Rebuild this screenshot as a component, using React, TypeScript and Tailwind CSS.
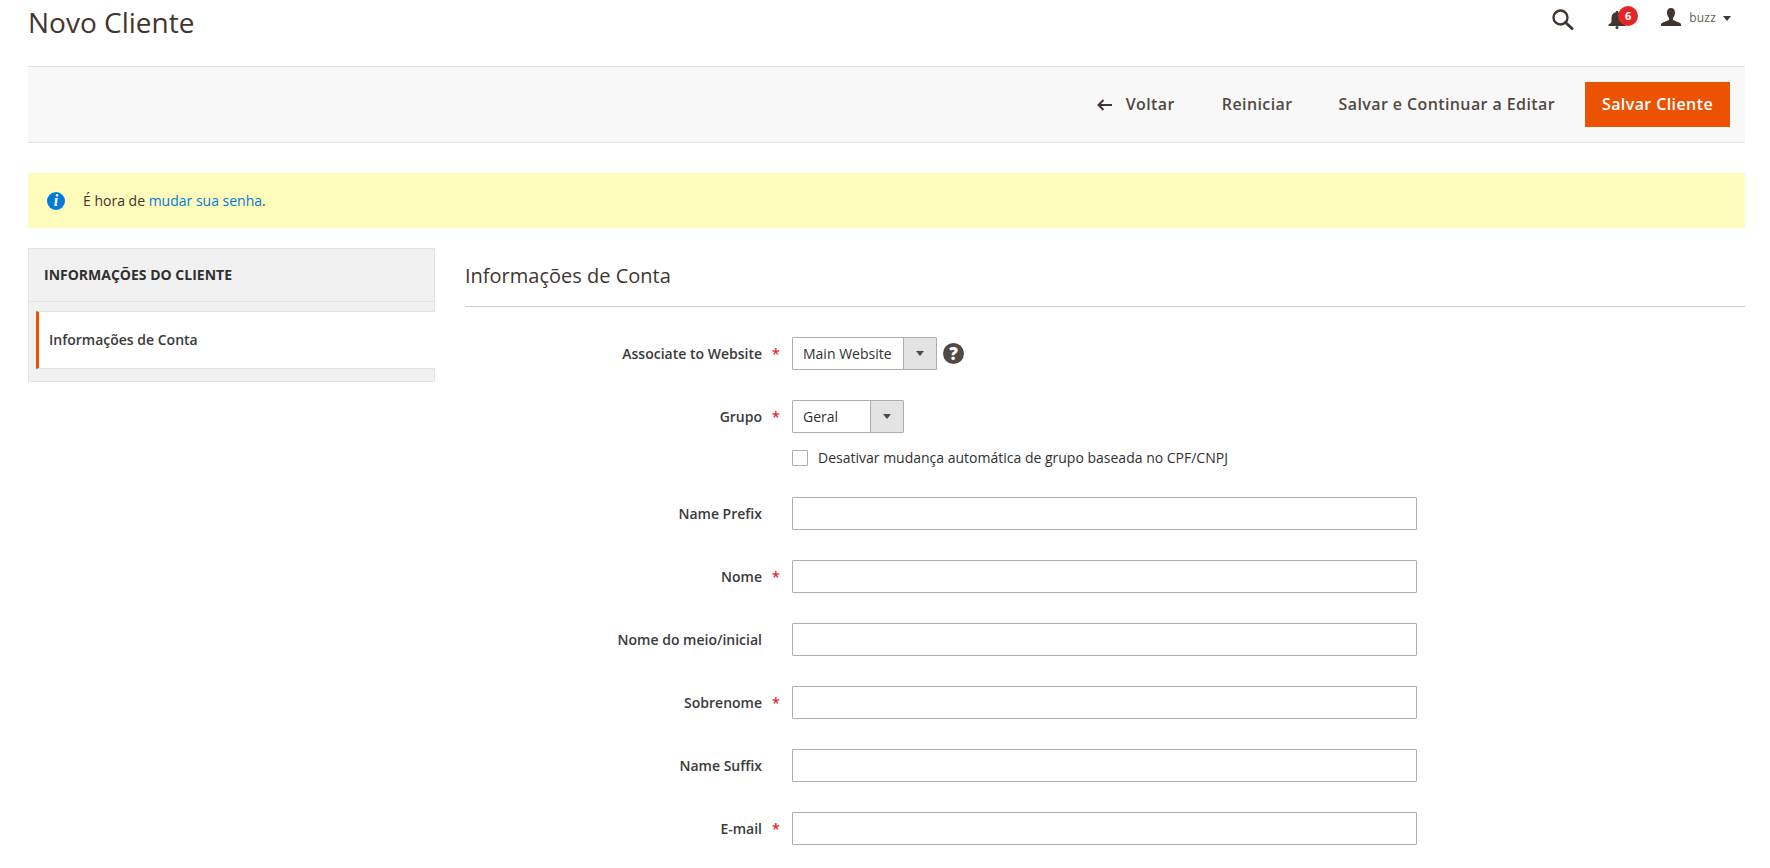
const rows = [
  { label: "Name Prefix", required: false },
  { label: "Nome", required: true },
  { label: "Nome do meio/inicial", required: false },
  { label: "Sobrenome", required: true },
  { label: "Name Suffix", required: false },
  { label: "E-mail", required: true },
];

const Label = ({ text, required }: { text: string; required?: boolean }) => (
  <div className="flex w-[327px] shrink-0 items-center justify-end pr-[10px]">
    <span className="text-[14px] font-semibold text-[#3a3a3a]">{text}</span>
    <span className="ml-[10px] w-[10px] text-[14px] font-semibold text-[#e22626]">
      {required ? "*" : ""}
    </span>
  </div>
);

const Select = ({ text, width, textWidth }: { text: string; width: string; textWidth: string }) => (
  <div className={`flex h-[33px] items-stretch rounded-[1px] border border-[#adadad] bg-white ${width}`}>
    <div className={`flex items-center pl-[10px] text-[14px] text-[#303030] ${textWidth}`}>{text}</div>
    <div className="flex flex-1 items-center justify-center border-l border-[#adadad] bg-[#e3e3e3]">
      <div className="h-0 w-0 border-x-[4px] border-t-[5px] border-x-transparent border-t-[#514943]" />
    </div>
  </div>
);

export default function App() {
  return (
    <div className="h-[868px] overflow-hidden bg-white font-['Open_Sans',sans-serif] text-[#303030]">
      {/* header */}
      <div className="flex h-[66px] items-start justify-between pl-[28px] pr-[39px]">
        <h1 className="mt-[2px] text-[28px] leading-[40px] font-normal text-[#41362f]">Novo Cliente</h1>
        <div className="flex items-start">
          <svg width="22" height="21" viewBox="0 0 22 21" fill="none" stroke="#41362f" className="mt-[9px] mr-[34px]">
            <circle cx="8.500" cy="8.500" r="7" strokeWidth="2.4" />
            <path d="M13.500 13.500l6.500 6" strokeWidth="3" strokeLinecap="round" />
          </svg>
          <div className="relative mt-[6px] mr-[23px] h-[22px] w-[30px]">
            <svg width="18" height="18" viewBox="0 0 18 18" fill="#41362f" className="absolute left-0 top-[5px]">
              <path d="M9 0c-.800 0-1.300.500-1.300 1.200C5 2 3.500 4 3.500 6.500v3.500c0 1.500-1 2.500-3 3.500V15h17v-1.500c-2-1-3-2-3-3.500V6.500c0-2.500-1.500-4.500-4.200-5.300C10.300.500 9.800 0 9 0z" />
              <circle cx="9" cy="16.500" r="1.500" />
            </svg>
            <div className="absolute left-[10px] top-0 flex h-[20px] w-[20px] items-center justify-center rounded-full bg-[#e22626] text-[11px] font-bold text-white">
              6
            </div>
          </div>
          <svg width="20" height="18" viewBox="0 0 20 18" fill="#41362f" className="mt-[8px] mr-[8px]">
            <path d="M10 0c2.800 0 4 1.800 4 4.500 0 2-.800 4.200-2 5.500v1.500c0 .800 3 1.800 5.500 2.800 1.500.600 2.500 1.200 2.500 2.200V18H0v-1.500c0-1 1-1.600 2.500-2.200C5 13.300 8 12.300 8 11.500V10C6.800 8.700 6 6.500 6 4.500 6 1.800 7.200 0 10 0z" />
          </svg>
          <span className="mt-[9px] text-[12px] leading-[17px] tracking-[0.2px] text-[#676056]">buzz</span>
          <div className="mt-[16px] ml-[7px] h-0 w-0 border-x-[4px] border-t-[5px] border-x-transparent border-t-[#41362f]" />
        </div>
      </div>

      <div className="pl-[28px] pr-[25px]">
        {/* action bar */}
        <div className="flex h-[77px] items-center justify-end border-y border-[#e3e3e3] bg-[#f8f8f8] pr-[15px] text-[16px] font-semibold tracking-[0.4px] text-[#514943]">
          <svg width="15" height="12" viewBox="0 0 15 12" fill="none" stroke="#41362f" strokeWidth="2" className="mr-[14px]">
            <path d="M15 6H1.500M6.500 1L1.500 6l5 5" />
          </svg>
          <span className="mr-[47px] mb-[2px]">Voltar</span>
          <span className="mr-[46px] mb-[2px]">Reiniciar</span>
          <span className="mr-[30px] mb-[2px]">Salvar e Continuar a Editar</span>
          <div className="flex h-[45px] w-[145px] items-center justify-center bg-[#eb5202] pb-[2px] text-white">Salvar Cliente</div>
        </div>

        {/* notice */}
        <div className="mt-[30px] flex h-[55px] items-center bg-[#fffbbb] pl-[19px] text-[14px] text-[#41362f]">
          <div className="mr-[18px] flex h-[18px] w-[18px] items-center justify-center rounded-full bg-[#007bdb] font-['Liberation_Serif',serif] text-[16px] font-bold italic text-white">
            i
          </div>
          <span>
            É hora de <span className="text-[#007bdb]">mudar sua senha</span>.
          </span>
        </div>

        <div className="mt-[20px] flex items-start">
          {/* sidebar */}
          <div className="w-[407px] shrink-0 border border-[#e3e3e3] bg-[#f1f1f1]">
            <div className="flex h-[53px] items-center border-b border-[#e3e3e3] pb-[1px] pl-[15px] text-[14px] font-bold text-[#303030]">
              INFORMAÇÕES DO CLIENTE
            </div>
            <div className="mt-[9px] mr-[-1px] mb-[12px] ml-[7px] flex h-[58px] items-center border-y border-[#e3e3e3] border-l-[3px] border-l-[#eb5202] bg-white pb-[2px] pl-[10px] text-[14px] font-semibold text-[#3a3a3a]">
              Informações de Conta
            </div>
          </div>

          {/* form */}
          <div className="ml-[30px] min-w-0 flex-1">
            <div className="flex h-[59px] items-center border-b border-[#cccccc] pb-[3px] text-[20px] text-[#41362f]">
              Informações de Conta
            </div>

            <div className="mt-[30px] flex h-[33px]">
              <Label text="Associate to Website" required />
              <Select text="Main Website" width="w-[145px]" textWidth="w-[110px]" />
              <div className="ml-[6px] mt-[6px] flex h-[21px] w-[21px] items-center justify-center rounded-full bg-[#514943] text-[17px] font-extrabold text-white">
                ?
              </div>
            </div>
            <div className="mt-[30px] flex h-[33px]">
              <Label text="Grupo" required />
              <Select text="Geral" width="w-[112px]" textWidth="w-[77px]" />
            </div>
            <div className="mt-[16px] flex h-[17px] items-center pl-[327px]">
              <div className="h-[16px] w-[16px] rounded-[1px] border border-[#adadad] bg-white" />
              <span className="ml-[10px] text-[14px] text-[#303030]">Desativar mudança automática de grupo baseada no CPF/CNPJ</span>
            </div>
            <div className="mt-[31px] flex flex-col gap-[30px]">
              {rows.map((r) => (
                <div key={r.label} className="flex h-[33px]">
                  <Label text={r.label} required={r.required} />
                  <div className="h-[33px] w-[625px] rounded-[1px] border border-[#adadad] bg-white" />
                </div>
              ))}
            </div>
          </div>
        </div>
      </div>
    </div>
  );
}
